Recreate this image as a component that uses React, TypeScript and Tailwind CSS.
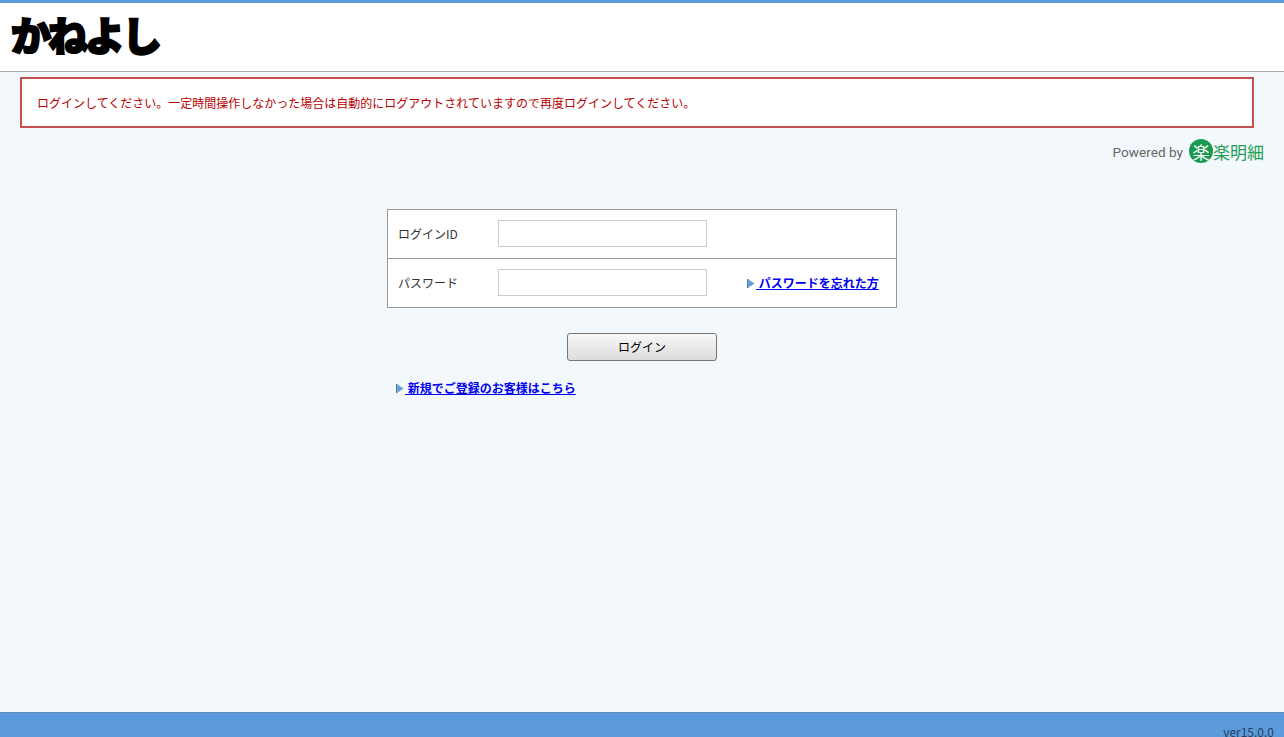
import React from "react"

const jp = "font-['Noto_Sans_CJK_JP','Noto_Sans',sans-serif]"

function Arrow() {
  return (
    <svg width="8" height="9" viewBox="0 0 8 9" className="shrink-0">
      <path d="M0 0H1.5L1.5 9H0Z" fill="#4f7299" />
      <path d="M1.5 0.5L7.5 4.5L1.5 8.5Z" fill="#5f9fd8" />
    </svg>
  )
}

function Rakumeisai() {
  return (
    <div className="flex items-center">
      <div className="flex h-[24px] w-[24px] items-center justify-center rounded-full bg-[#1a9a50] text-[17px] font-normal leading-none text-white">楽</div>
      <span className="text-[17px] leading-none text-[#1fa055]">楽明細</span>
    </div>
  )
}

export default function App() {
  return (
    <div className={`flex h-[737px] flex-col overflow-hidden bg-[#f3f8fc] text-[12px] text-[#333] ${jp}`}>
      <header className="h-[72px] shrink-0 border-t-[3px] border-b border-t-[#5b9bdc] border-b-[#aaa] bg-white pl-[11px]">
        <div className="h-[68px] text-[40px] font-black leading-[62px] tracking-[-3px] text-black [-webkit-text-stroke:2px_#000]">かねよし</div>
      </header>

      <main className="flex-1">
        <div className="ml-[20px] mt-[5px] flex h-[51px] w-[1234px] items-center border-2 border-[#c4504f] bg-white pl-[15px] text-[#b80000]">
          ログインしてください。一定時間操作しなかった場合は自動的にログアウトされていますので再度ログインしてください。
        </div>

        <div className="mr-[20px] mt-[11px] flex h-[24px] items-center justify-end gap-[6px]">
          <span className="pt-[2px] font-['Roboto',sans-serif] text-[13.6px] text-[#666]">Powered by</span>
          <Rakumeisai />
        </div>

        <div className="mx-auto mt-[46px] w-[510px]">
          <div className="border border-[#999] bg-white">
            <div className="flex h-[49px] items-center border-b border-[#999] pl-[10px]">
              <span className="w-[100px]">ログインID</span>
              <input className="mb-[2px] h-[27px] w-[209px] border border-[#ccc] bg-white" />
            </div>
            <div className="flex h-[48px] items-center pl-[10px]">
              <span className="w-[100px]">パスワード</span>
              <input type="password" className="mb-[2px] h-[27px] w-[209px] border border-[#ccc] bg-white" />
              <a href="#" className="ml-[40px] flex items-center font-bold text-[#0000ee]">
                <Arrow />
                <span className="pl-[1px] underline">&nbsp;パスワードを忘れた方</span>
              </a>
            </div>
          </div>

          <div className="mt-[25px] flex justify-center">
            <button className="h-[28px] w-[150px] rounded-[3px] border border-[#777] bg-gradient-to-b from-[#f8f8f8] to-[#dcdcdc] text-black">ログイン</button>
          </div>

          <a href="#" className="ml-[9px] mt-[18px] flex items-center font-bold text-[#0000ee]">
            <Arrow />
            <span className="pl-[1px] underline">&nbsp;新規でご登録のお客様はこちら</span>
          </a>
        </div>
      </main>

      <footer className="flex h-[25px] shrink-0 justify-end border-t border-[#5a8fc0] bg-[#5b9bdc] pr-[10px] pt-[10px] text-[#26405e]">
        <span className="leading-[18px]">ver15.0.0</span>
      </footer>
    </div>
  )
}
